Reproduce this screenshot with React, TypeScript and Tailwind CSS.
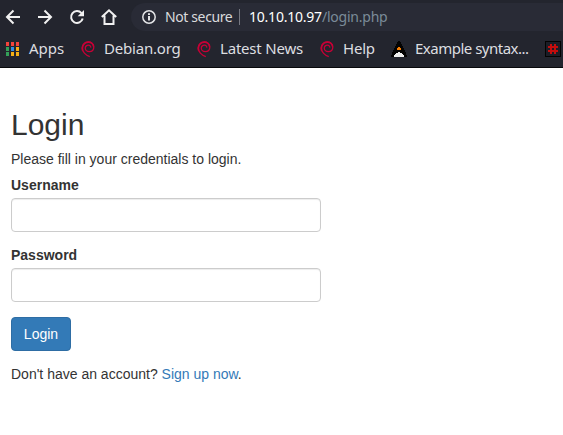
import React from "react";

const swirl =
  "M8.8 15.600C4.500 14.200 1.200 10.500 1.200 7C1.200 3.300 4 1 7.300 1C10.500 1 12.800 3 12.800 6C12.800 9 10.800 10.600 8.300 10.600C5.800 10.600 4.300 9 4.300 7.200C4.300 5.200 5.800 4.200 7.500 4.200C9 4.200 9.900 5.200 9.700 6.700";

function Debian() {
  return (
    <svg className="h-[17px] w-4 shrink-0" viewBox="0 0 16 17" fill="none" stroke="#c70036">
      <path d={swirl} strokeWidth="1.300" />
      <path d="M1.700 9.500C.5 5 3 1.300 7.300 1.200C10 1.100 12.300 2.800 12.500 5.500" strokeWidth="1.700" />
    </svg>
  );
}

function Apps() {
  const colors = ["#f4433c", "#f4433c", "#f4433c", "#34a058", "#2f8de4", "#f5b016", "#34a058", "#f5b016", "#f5b016"];
  return (
    <svg className="h-[14px] w-[13px] shrink-0" viewBox="0 0 13 14" shapeRendering="crispEdges">
      {colors.map((c, i) => (
        <rect key={i} x={(i % 3) * 5} y={Math.floor(i / 3) * 5} width="3" height="4" fill={c} />
      ))}
    </svg>
  );
}

function Penguin() {
  return (
    <svg className="h-4 w-4 shrink-0" viewBox="0 0 16 16" shapeRendering="crispEdges">
      <path d="M7 0h2v1h1v2h1v2h1v2h1v2h1v2h1v3h1v2H0v-2h1v-3h1V9h1V7h1V5h1V3h1V1h1z" fill="#030303" />
      <path d="M7 6h2v1h1v2H6V7h1z" fill="#f57c00" />
      <path d="M7 11h2v1h2v1h1v1h1v2H3v-2h1v-1h1v-1h2z" fill="#eee" />
    </svg>
  );
}

function Hash() {
  return (
    <svg className="h-4 w-4 shrink-0" viewBox="0 0 16 16" shapeRendering="crispEdges">
      <path d="M0 0h16v16H0z" fill="#030303" />
      <path d="M1 1h14v14H1z" fill="#1b1d26" />
      <path d="M5 3h2v2h2V3h2v2h2v2h-2v2h2v2h-2v2H9v-2H7v2H5v-2H3V9h2V7H3V5h2zM7 7v2h2V7z" fill="#c30d0d" />
    </svg>
  );
}

const bar = "font-['Noto_Sans',sans-serif] whitespace-nowrap";

export default function App() {
  return (
    <div className="h-[435px] w-[563px] overflow-hidden bg-white">
      <header className={`h-[68px] border-b border-[#08090c] bg-[#23252e] ${bar}`}>
        <div className="flex h-[34px] pt-[3px]">
          <svg className="h-[28px] w-[131px] shrink-0" viewBox="0 3 131 28" fill="none" stroke="#f1f1f1" strokeWidth="2">
            <path d="M20 17H7.500M13.500 10.500L7 17l6.500 6.500M38 17h12.500M44.500 10.500L51 17l-6.500 6.500" />
            <path d="M81.500 13.200A5.900 5.900 0 1 0 82.700 18.500" />
            <path d="M84 10v6.300h-6.300z" fill="#f1f1f1" stroke="none" />
            <path d="M101.800 17L109 10.300L116.200 17M104.500 15.500V24h9v-8.500" />
          </svg>
          <div className="flex h-[28px] flex-1 items-center rounded-l-full bg-[#292b36] pl-[11px] text-[14px] leading-[19px]">
            <svg className="h-4 w-4 shrink-0" viewBox="0 0 16 16" fill="none" stroke="#e4e5e7" strokeWidth="1.500">
              <circle cx="7" cy="8" r="6.200" />
              <path d="M7 7v4.500M7 4.300v1.700" strokeWidth="2" />
            </svg>
            <span className="ml-[7px] w-[74px] pb-px tracking-[-0.38px] text-[#d9dadc]">Not secure</span>
            <span className="h-4 w-px bg-[#777982]" />
            <span className="ml-[9px] pb-px tracking-[-0.220px] text-white">
              10.10.10.97<span className="text-[#7b8b99]">/login.php</span>
            </span>
          </div>
        </div>
        <nav className="flex h-[30px] items-center pl-[6px] text-[15px] leading-5 tracking-[-0.200px] text-[#dddee0]">
          <Apps />
          <span className="ml-[10px] w-[52px] pb-0.5 tracking-normal">Apps</span>
          <Debian />
          <span className="ml-[7px] w-[93px] pb-0.5">Debian.org</span>
          <Debian />
          <span className="ml-[7px] w-[100px] pb-0.5">Latest News</span>
          <Debian />
          <span className="ml-[7px] w-[48px] pb-0.5">Help</span>
          <Penguin />
          <span className="ml-2 w-[130px] pb-0.5 tracking-[-0.500px]">Example syntax...</span>
          <Hash />
        </nav>
      </header>
      <main className="flex flex-col items-start pt-10 pl-[11px] font-['Liberation_Sans',Arial,sans-serif] text-[14px] leading-4 text-[#333]">
        <h2 className="mb-[10px] text-[30px] leading-[33px] font-medium">Login</h2>
        <p className="mb-[10px]">Please fill in your credentials to login.</p>
        <form className="flex w-[310px] flex-col items-start" onSubmit={(e) => e.preventDefault()}>
          <label htmlFor="user" className="mb-[5px] font-bold">Username</label>
          <input id="user" className="mb-[15px] h-[34px] w-full rounded-[4px] border border-[#ccc] px-3 shadow-[inset_0_1px_1px_rgba(0,0,0,0.075)]" />
          <label htmlFor="pass" className="mb-[5px] font-bold">Password</label>
          <input id="pass" type="password" className="mb-[15px] h-[34px] w-full rounded-[4px] border border-[#ccc] px-3 shadow-[inset_0_1px_1px_rgba(0,0,0,0.075)]" />
          <button className="mb-[15px] h-[34px] w-[60px] rounded-[4px] border border-[#2e6da4] bg-[#337ab7] text-white">Login</button>
        </form>
        <p>
          Don't have an account? <a href="#" className="text-[#337ab7]">Sign up now</a>.
        </p>
      </main>
    </div>
  );
}
